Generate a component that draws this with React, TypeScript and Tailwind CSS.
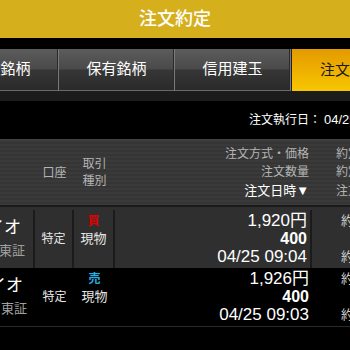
import React from "react";

const FONT = "font-['Liberation_Sans','Noto_Sans_CJK_JP',sans-serif]";

function Tab({ label, active }: { label: string; active?: boolean }) {
  if (active) {
    return (
      <div className="w-[117px] shrink-0 h-full flex items-center justify-center bg-[linear-gradient(180deg,#e39a00_0%,#eeb000_50%,#f7c600_100%)] text-[#1a1a1a] text-[15px] border-l border-[#222]">
        {label}
      </div>
    );
  }
  return (
    <div className="w-[116px] shrink-0 h-full flex items-center justify-center bg-[linear-gradient(180deg,#5c5c5c_0%,#4a4a4a_48%,#363636_52%,#2a2a2a_100%)] text-white text-[15px] border-r border-[#7a7a7a] border-b border-b-[#6a6a6a] shadow-[inset_-1px_0_0_#2a2a2a]">
        {label}
    </div>
  );
}

function Row({
  bg,
  side,
  sideColor,
  price,
  time,
  divided,
  h,
  pt,
}: {
  bg: string;
  side: string;
  sideColor: string;
  price: string;
  time: string;
  divided?: boolean;
  h: string;
  pt: string;
}) {
  const div = divided ? "border-r-2 border-[#1b1b1b]" : "";
  return (
    <div className={`flex ${h} ${bg} ${pt}`}>
      <div className={`w-[35px] shrink-0 flex flex-col justify-center items-end pr-[12px] overflow-hidden ${div}`}>
        <div className="whitespace-nowrap text-white text-[17px] leading-[24px]">イオ</div>
        <div className="whitespace-nowrap text-[#a0a0a0] text-[13px] leading-[22px] -mr-[4px]">東証</div>
      </div>
      <div className={`w-[39px] shrink-0 flex flex-col justify-center items-center ${div}`}>
        <div className="leading-[18px] text-[12px]">&nbsp;</div>
        <div className="leading-[18px] text-[12px] text-[#e6e6e6]">特定</div>
        <div className="leading-[18px] text-[12px]">&nbsp;</div>
      </div>
      <div className={`w-[41px] shrink-0 flex flex-col justify-center items-center ${div}`}>
        <div className={`leading-[18px] text-[12px] font-bold ${sideColor}`}>{side}</div>
        <div className="leading-[18px] text-[13px] text-[#e6e6e6]">現物</div>
        <div className="leading-[18px] text-[12px]">&nbsp;</div>
      </div>
      <div className={`w-[197px] shrink-0 flex flex-col justify-center items-end pr-[3px] ${div}`}>
        <div className="leading-[18px] text-[17px] text-white whitespace-nowrap">{price}</div>
        <div className="leading-[18px] text-[16px] font-bold text-white">400</div>
        <div className="leading-[18px] text-[17px] text-white whitespace-nowrap">{time}</div>
      </div>
      <div className="flex-1 flex flex-col justify-center pl-[29px] overflow-hidden">
        <div className="leading-[18px] text-[13px] text-[#d0d0d0] whitespace-nowrap">約定</div>
        <div className="leading-[18px] text-[13px]">&nbsp;</div>
        <div className="leading-[18px] text-[13px] text-[#d0d0d0] whitespace-nowrap">約定</div>
      </div>
    </div>
  );
}

export default function App() {
  return (
    <div className={`w-[350px] h-[350px] bg-black overflow-hidden ${FONT}`}>
      <div className="h-[38px] bg-[#d5af1c] flex items-center justify-center text-white text-[18px] font-medium">
        注文約定
      </div>
      <div className="h-[11px] bg-black" />
      <div className="h-[42px] flex -ml-[57px]">
        <Tab label="注文銘柄" />
        <Tab label="保有銘柄" />
        <Tab label="信用建玉" />
        <Tab label="注文約定" active />
      </div>
      <div className="h-[10px] bg-[#1c1c1c]" />
      <div className="h-[38px] bg-black flex items-center pl-[249px] text-white whitespace-nowrap overflow-hidden">
        <span className="text-[12px]">注文執行日：</span>
        <span className="ml-[3px] text-[13px]">04/25</span>
      </div>
      <div className="h-[66px] flex bg-[repeating-linear-gradient(180deg,#3a3a3a_0px,#3a3a3a_2px,#353535_2px,#353535_4px)] border-t border-[#444]">
        <div className="w-[35px] shrink-0" />
        <div className="w-[39px] shrink-0 flex items-center justify-center text-[12px] text-[#b4b4b4]">口座</div>
        <div className="w-[41px] shrink-0 flex flex-col items-center justify-center text-[12px] text-[#b4b4b4] leading-[17px]">
          <div>取引</div>
          <div>種別</div>
        </div>
        <div className="w-[197px] shrink-0 flex flex-col items-end justify-center pr-[3px] leading-[18.5px]">
          <div className="text-[12px] text-[#b4b4b4] whitespace-nowrap">注文方式・価格</div>
          <div className="text-[12px] text-[#b4b4b4]">注文数量</div>
          <div className="text-[13px] text-white whitespace-nowrap">注文日時▼</div>
        </div>
        <div className="flex-1 flex flex-col justify-center pl-[24px] overflow-hidden leading-[18.5px] text-[12px] text-[#b4b4b4]">
          <div className="whitespace-nowrap">約定</div>
          <div className="whitespace-nowrap">約定</div>
          <div className="whitespace-nowrap">注文</div>
        </div>
      </div>
      <div className="h-[2px] bg-[#1a1a1a]" />
      <Row bg="bg-[#2f2f2f]" side="買" sideColor="text-[#e00000]" price="1,920円" time="04/25 09:04" divided h="h-[61px]" pt="pt-[3px]" />
      <Row bg="bg-black" side="売" sideColor="text-[#25aee0]" price="1,926円" time="04/25 09:03" h="h-[58px]" pt="pt-0" />
      <div className="h-[1px] bg-[#2a2a2a]" />
    </div>
  );
}
